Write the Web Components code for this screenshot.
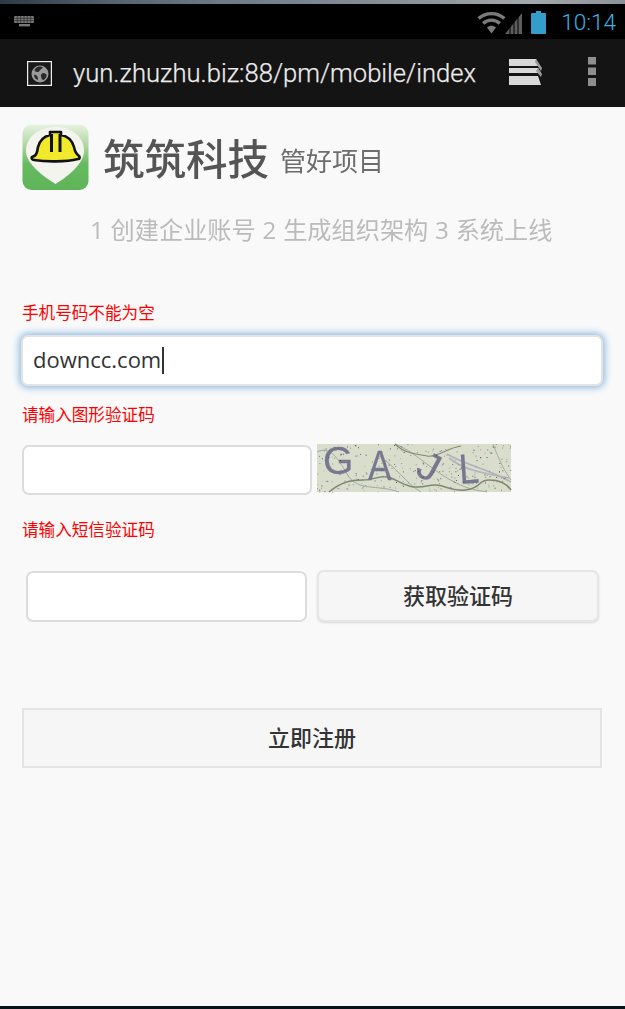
<!DOCTYPE html>
<html lang="zh"><head><meta charset="utf-8"><title>筑筑科技</title>
<style>
html,body{margin:0;padding:0;height:100%;background:#f9f9f9}
body{font-family:"Open Sans","Noto Sans CJK SC",sans-serif;width:625px;height:1009px;overflow:hidden;display:flex;flex-direction:column}
</style></head><body>
<phone-status></phone-status>
<browser-bar url="yun.zhuzhu.biz:88/pm/mobile/index"></browser-bar>
<register-page>
  <brand-header name="筑筑科技" tag="管好项目" steps="1 创建企业账号 2 生成组织架构 3 系统上线"></brand-header>
  <field-hint style="margin-top:52px">手机号码不能为空</field-hint>
  <text-box focused style="margin:11px 22px 0 21px;height:51px;padding-bottom:2px">downcc.com</text-box>
  <field-hint style="margin-top:16px">请输入图形验证码</field-hint>
  <form-row style="margin-top:18px;height:51px">
    <text-box style="width:290px;height:50px;margin-top:1px"></text-box>
    <captcha-image style="margin-left:5px"></captcha-image>
  </form-row>
  <field-hint style="margin-top:22px">请输入短信验证码</field-hint>
  <form-row style="margin-top:29px;height:52px;padding-left:26px">
    <text-box style="width:281px;height:51px;margin-top:1px"></text-box>
    <action-button raised style="width:282px;height:52px;margin-left:10px;padding-bottom:4px">获取验证码</action-button>
  </form-row>
  <action-button style="margin:86px 23px 0 22px;height:60px;padding-bottom:4px">立即注册</action-button>
</register-page>
<script>
const def=(n,html,extra={})=>{customElements.define(n,class extends HTMLElement{
  connectedCallback(){ if(!this.shadowRoot){this.attachShadow({mode:'open'}).innerHTML=typeof html==='function'?html(this):html;}
    if(extra.ready)extra.ready(this);}
});};
def('phone-status',`<style>
:host{display:block;height:39px;background:#000;flex:none;position:relative;font-family:Roboto,sans-serif}
.wall{height:4px;background:linear-gradient(90deg,#2c3a48 0,#55636f 18%,#6c7a86 35%,#7f8a93 55%,#8f979c 70%,#a4a8aa 85%,#8a9299 100%)}
.bar{height:35px;display:flex;align-items:center;padding-left:14px}
.sp{flex:1}
svg{display:block}
.t{color:#33b5e5;font-size:22.6px;font-weight:300;margin:0 9px 0 15px;line-height:35px;position:relative;top:1px}
</style>
<div class="wall"></div>
<div class="bar">
<svg width="20" height="11" viewBox="0 0 20 11" style="margin-top:-1px"><g fill="#777"><rect x="0" y="0" width="20" height="7" rx="1"/><rect x="5" y="8" width="11" height="2.4"/></g><g stroke="#222" stroke-width=".6"><path d="M3.3 0v7M6.6 0v7M10 0v7M13.3 0v7M16.6 0v7M0 2.3h20M0 4.6h20"/></g></svg>
<span class="sp"></span>
<svg width="46" height="24" viewBox="0 0 46 24" style="margin-top:3px"><g fill="none" stroke="#7b7b7b" stroke-width="3.4"><path d="M1.6 7.6C9 1 20 1 27.4 7.6"/><path d="M6.2 12.4C11 8 18 8 22.8 12.4"/></g><path d="M10 16.5C12.5 14 16.5 14 19 16.5L14.5 22.5Z" fill="#7b7b7b"/><path d="M28 23L45 2V23Z" fill="#5d5d5d"/><g stroke="#000" stroke-width="1"><path d="M33 23V15M37 23V10M41 23V6"/></g></svg>
<svg width="15" height="23" viewBox="0 0 15 23" style="margin:2px 0 0 8px"><path d="M5 0h5v2h4a1 1 0 0 1 1 1v19a1 1 0 0 1-1 1H1a1 1 0 0 1-1-1V3a1 1 0 0 1 1-1h4z" fill="#339ecb"/></svg>
<span class="t">10:14</span>
</div>`);
def('browser-bar',h=>`<style>
:host{display:block;height:68px;background:#141414;flex:none;font-family:Roboto,sans-serif}
.b{display:flex;align-items:center;height:68px;padding-left:27px}
.u{color:#ececec;font-size:25.6px;font-weight:300;margin-left:21px;white-space:nowrap;-webkit-text-stroke:.25px #ececec;width:436px;flex:none}
svg{display:block;flex:none}
</style><div class="b">
<svg width="25" height="25" viewBox="0 0 25 25"><rect x=".5" y=".5" width="24" height="24" fill="#1a1a1a" stroke="#f0f0f0" stroke-width="1.4"/><circle cx="13" cy="13" r="8.5" fill="#9a9a9a"/><path d="M13 5.5c-3 0-5 2-5.5 4 2 2 4 2 5 .5s2-2 3.500-3.500c-1-.7-2-1-3-1zM16.500 12c-1.500 0-3 1.500-2.500 3.500s1 3.500 2.500 3.500c2-1 3.500-3.500 3-5.500-1-1-2-1.500-3-1.500zM7 14c0 2 1.500 4 3.500 5 1-1 .5-3-.5-4s-2-1.500-3-1z" fill="#2a2a2a"/></svg>
<span class="u">${h.getAttribute('url')}</span>
<svg width="33" height="26" viewBox="0 0 33 26" style="margin-top:-3px"><g fill="#d8d8d8"><path d="M0 0H27L31 7H0Z"/><path d="M0 9H29L32 14H0Z"/><path d="M0 17H29L32 26H0Z"/></g><path d="M27 0L33 9L32 12L26 3Z" fill="#9a9a9a"/><path d="M29 9L33 15L32 18L27 12Z" fill="#9a9a9a"/></svg>
<svg width="8" height="29" viewBox="0 0 8 29" style="margin:-3px 0 0 46px"><g fill="#8e8e8e"><rect width="8" height="7.500"/><rect y="10.500" width="8" height="7.500"/><rect y="21" width="8" height="8"/></g></svg>
</div>`);
def('register-page',`<style>:host{display:block;flex:1;background:#f9f9f9;position:relative;border-bottom:3px solid #06141a;min-height:0}</style><slot></slot>`);
def('brand-header',h=>`<style>
:host{display:block;padding:17px 0 0 22px;font-family:"Noto Sans CJK SC",sans-serif}
.r{display:flex;align-items:center;height:67px}
.n{font-size:41.5px;font-weight:500;color:#555;margin-left:14px;filter:blur(.5px);line-height:67px}
.g{font-size:26px;color:#6c6c6c;margin:4px 0 0 11px;filter:blur(.4px)}
.s{font-size:24.2px;word-spacing:.5px;color:#bbb;margin:21px 0 0 68px;line-height:36px;white-space:nowrap;filter:blur(.5px);font-family:"Open Sans","Noto Sans CJK SC",sans-serif}
svg{display:block;flex:none;filter:blur(.35px)}
</style><div class="r">
<svg width="67" height="67" viewBox="0 0 67 67"><defs><linearGradient id="g" x1="0" y1="0" x2="0" y2="1"><stop offset="0" stop-color="#e8f2e2"/><stop offset=".35" stop-color="#a9d49a"/><stop offset=".6" stop-color="#66bb60"/><stop offset="1" stop-color="#5fb45a"/></linearGradient></defs>
<rect x=".5" y=".5" width="66" height="65.500" rx="9" fill="url(#g)"/><path d="M4 27C4 12 18 3 33.500 3S62 12 62 27C62 40 45 53 33.500 60 22 53 4 40 4 27z" fill="#f4f4ee"/>
<path d="M10 33c4-1 5-3 6-10 2-8 8-11 12-12V8h11v3c6 1 11 5 13 12 1 5 2 7 5 9 1 1 1 3-1 3-12 3-32 3-44 1-2 0-3-2-2-3z" fill="#f1e92c" stroke="#111" stroke-width="2.600" stroke-linejoin="round"/>
<path d="M29.500 10v18M38 10v18" stroke="#111" stroke-width="3"/></svg>
<span class="n">${h.getAttribute('name')}</span><span class="g">${h.getAttribute('tag')}</span></div>
<div class="s">${h.getAttribute('steps')}</div>`);
def('field-hint',`<style>:host{display:block;padding-left:22px;color:#f00;font-size:16.600px;line-height:24px;font-family:"Noto Sans CJK SC",sans-serif;white-space:nowrap}</style><slot></slot>`);
def('form-row',`<style>:host{display:flex;padding-left:22px;align-items:flex-start}</style><slot></slot>`);
customElements.define('text-box',class extends HTMLElement{connectedCallback(){if(this.shadowRoot)return;
 const f=this.hasAttribute('focused');
 this.attachShadow({mode:'open'}).innerHTML=`<style>
:host{display:flex;align-items:center;box-sizing:border-box;background:#fff;border-radius:7px;padding-left:10px;font-size:22px;color:#333;flex:none;
 border:2px solid ${f?'#e4e4e4':'#dcdcdc'};${f?'box-shadow:0 0 7px 2px #8fbce4;':''}}
.c{display:inline-block;width:2px;height:27px;background:#333;margin-left:1px;vertical-align:middle;position:relative;top:-1px}
</style><span><slot></slot>${f?'<span class="c"></span>':''}</span>`;}});
customElements.define('action-button',class extends HTMLElement{connectedCallback(){if(this.shadowRoot)return;
 const r=this.hasAttribute('raised');
 this.attachShadow({mode:'open'}).innerHTML=`<style>
:host{display:flex;align-items:center;justify-content:center;box-sizing:border-box;background:#f6f6f6;color:#333;font-size:22px;font-weight:500;font-family:"Noto Sans CJK SC",sans-serif;flex:none;
 border:2px solid ${r?'#e6e6e6':'#e4e4e4'};${r?'border-radius:7px;box-shadow:0 1px 2px #d8d8d8;':''}}
</style><slot></slot>`;}});
customElements.define('captcha-image',class extends HTMLElement{connectedCallback(){if(this.shadowRoot)return;
 let s=7;const R=()=>(s=(s*16807)%2147483647)/2147483647;
 const C=['#6a6a90','#c06a6a','#4a9a6a','#4040a0','#3a3a3a','#a080b0','#80c0a0'];let d='';
 for(let i=0;i<260;i++)d+=`<rect x="${(R()*194).toFixed(1)}" y="${(R()*48).toFixed(1)}" width="1" height="1" fill="${C[Math.floor(R()*C.length)]}" opacity=".8"/>`;
 this.attachShadow({mode:'open'}).innerHTML=`<style>:host{display:block;width:194px;height:48px;flex:none}svg{display:block;overflow:visible;filter:blur(.3px)}text{font-family:"Liberation Sans",sans-serif;fill:#77778f;stroke:#77778f;stroke-width:.3px;font-size:39px}</style>
<svg width="194" height="48" viewBox="0 0 194 48"><rect width="194" height="48" fill="#d8decb"/>
<g fill="none" stroke="#a4a9a2" stroke-width="1"><path d="M0 8C12 2 20 12 30 30S60 40 82 48"/><path d="M78 0C95 6 110 22 130 34S160 46 170 48"/><path d="M62 12C78 22 90 40 104 48"/></g>
<g fill="none" stroke="#b4b0bc" stroke-width="1.600"><path d="M130 10C150 22 170 24 194 38"/><path d="M132 14C150 28 172 30 192 34"/></g>
<path d="M176 0C182 16 188 28 194 36" fill="none" stroke="#a4aea4" stroke-width="1"/>
<path d="M12 48C24 38 34 36 46 36S64 30 74 34 92 46 110 42 130 48 148 46 160 36 172 36 190 40 194 46" fill="none" stroke="#80866f" stroke-width="1.500"/>
<path d="M78 0C88 10 100 10 110 12S130 4 144 2" fill="none" stroke="#80866f" stroke-width="1.100"/>
<text x="6" y="30">G</text>
<text transform="translate(51 36) scale(.82 1)" style="font-size:43px">A</text>
<text transform="translate(97 30) rotate(28)" style="font-size:40px">J</text>
<text transform="translate(143 40) rotate(-4) scale(.85 1)" style="font-size:42px">L</text>
${d}</svg>`;}});
</script>
</body></html>
